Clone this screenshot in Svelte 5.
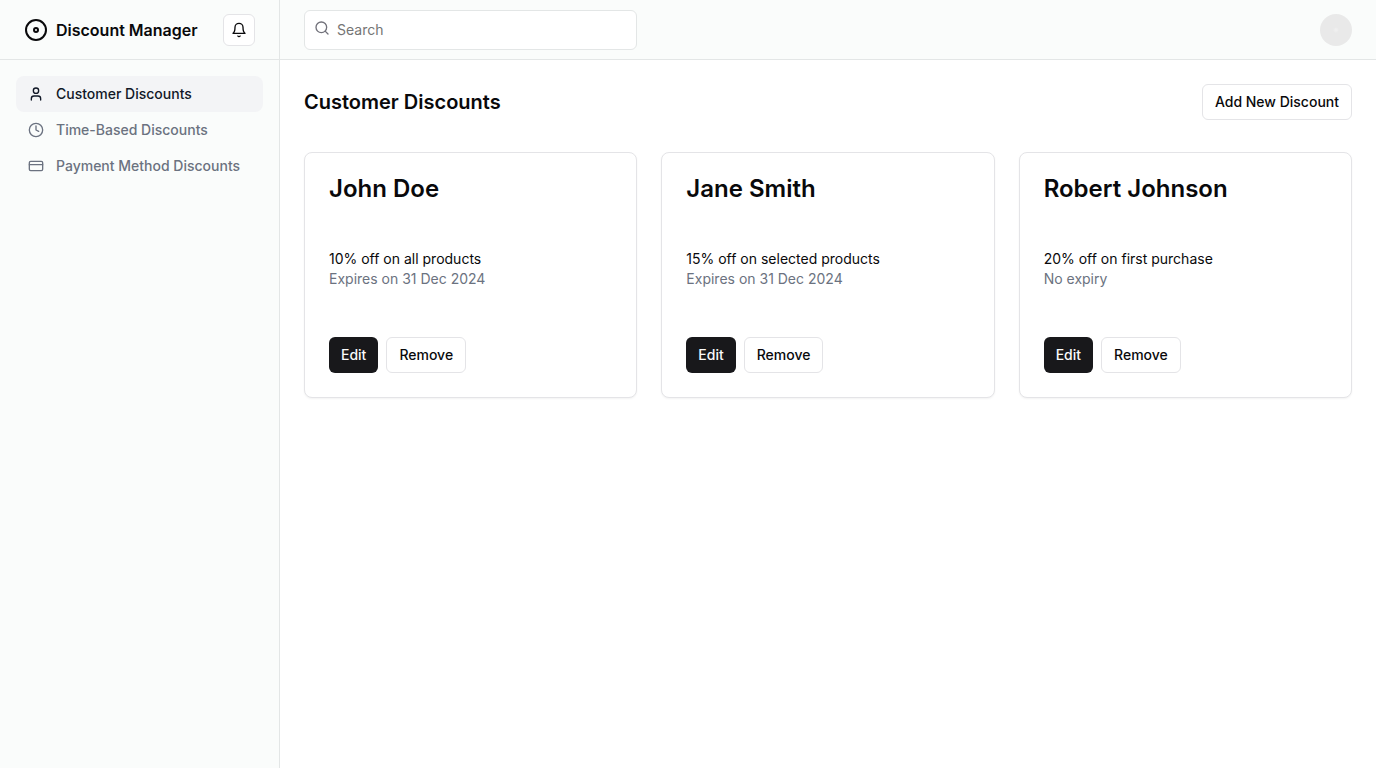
<script>
  const customers = [
    { name: 'John Doe', offer: '10% off on all products', expiry: 'Expires on 31 Dec 2024' },
    { name: 'Jane Smith', offer: '15% off on selected products', expiry: 'Expires on 31 Dec 2024' },
    { name: 'Robert Johnson', offer: '20% off on first purchase', expiry: 'No expiry' }
  ];
  let query = $state('');
</script>

<div class="layout">
  <aside class="sidebar">
    <div class="brand-bar">
      <a class="brand" href="#home">
        <svg class="icon logo" viewBox="0 0 24 24" aria-hidden="true">
          <circle cx="12" cy="12" r="10" />
          <circle cx="12" cy="12" r="2" />
        </svg>
        <span>Discount Manager</span>
      </a>
      <button class="btn bell" type="button" aria-label="Notifications">
        <svg class="icon" viewBox="0 0 24 24" aria-hidden="true">
          <path d="M6 8a6 6 0 0 1 12 0c0 7 3 9 3 9H3s3-2 3-9" />
          <path d="M10.3 21a1.94 1.94 0 0 0 3.4 0" />
        </svg>
      </button>
    </div>
    <nav class="nav">
      <a class="active" href="#customer" aria-current="page">
        <svg class="icon" viewBox="0 0 24 24" aria-hidden="true">
          <path d="M19 21v-2a4 4 0 0 0-4-4H9a4 4 0 0 0-4 4v2" />
          <circle cx="12" cy="7" r="4" />
        </svg>
        Customer Discounts
      </a>
      <a href="#time">
        <svg class="icon" viewBox="0 0 24 24" aria-hidden="true">
          <circle cx="12" cy="12" r="10" />
          <path d="M12 6v6l4 2" />
        </svg>
        Time-Based Discounts
      </a>
      <a href="#payment">
        <svg class="icon" viewBox="0 0 24 24" aria-hidden="true">
          <rect x="2" y="5" width="20" height="14" rx="2" />
          <path d="M2 10h20" />
        </svg>
        Payment Method Discounts
      </a>
    </nav>
  </aside>

  <div class="page">
    <header class="topbar">
      <form class="search" role="search">
        <svg class="icon" viewBox="0 0 24 24" aria-hidden="true">
          <circle cx="11" cy="11" r="8" />
          <path d="m21 21-4.3-4.3" />
        </svg>
        <input type="search" placeholder="Search" aria-label="Search" bind:value={query} />
      </form>
      <button class="avatar" type="button" aria-label="User menu"></button>
    </header>

    <main class="content">
      <div class="heading">
        <h1>Customer Discounts</h1>
        <button class="btn" type="button">Add New Discount</button>
      </div>
      <div class="cards">
        {#each customers as customer}
          <article class="card">
            <h2>{customer.name}</h2>
            <div class="details">
              <p>{customer.offer}</p>
              <p class="expiry">{customer.expiry}</p>
            </div>
            <div class="actions">
              <button class="btn primary" type="button">Edit</button>
              <button class="btn" type="button">Remove</button>
            </div>
          </article>
        {/each}
      </div>
    </main>
  </div>
</div>

<style>
  :global(body) {
    margin: 0;
    background: #fff;
    color: #09090b;
    font-family: Inter, sans-serif;
    font-size: 14px;
    line-height: 20px;
  }
  .layout, .layout * { box-sizing: border-box; }
  .layout {
    display: grid;
    grid-template-columns: 280px minmax(0, 1fr);
    min-height: 100vh;
  }
  h1, h2, p { margin: 0; }
  h1, h2 { font-weight: 600; }
  a { color: inherit; text-decoration: none; }
  .icon {
    width: 16px;
    height: 16px;
    flex-shrink: 0;
    fill: none;
    stroke: currentColor;
    stroke-width: 2;
    stroke-linecap: round;
    stroke-linejoin: round;
  }
  .sidebar {
    background: #fafcfb;
    border-right: 1px solid #e3e6e6;
  }
  .brand-bar {
    display: flex;
    align-items: center;
    justify-content: space-between;
    height: 60px;
    padding: 0 24px;
    border-bottom: 1px solid #e3e6e6;
  }
  .brand {
    display: flex;
    align-items: center;
    gap: 8px;
    font-size: 16px;
    line-height: 24px;
    font-weight: 600;
  }
  .logo { width: 24px; height: 24px; }
  .btn {
    display: inline-flex;
    align-items: center;
    justify-content: center;
    height: 36px;
    padding: 0 12px;
    border: 1px solid #e4e4e7;
    border-radius: 6px;
    background: #fff;
    color: #09090b;
    font: inherit;
    font-weight: 500;
    white-space: nowrap;
    cursor: pointer;
  }
  .bell { width: 32px; height: 32px; padding: 0; }
  .primary { background: #18181b; border: 0; color: #fafafa; }
  .nav {
    display: flex;
    flex-direction: column;
    padding: 16px;
    font-weight: 500;
  }
  .nav a {
    display: flex;
    align-items: center;
    gap: 12px;
    padding: 8px 12px;
    border-radius: 8px;
    color: #6b7280;
  }
  .nav .active { background: #f3f4f6; color: #111827; }
  .topbar {
    display: flex;
    align-items: center;
    justify-content: space-between;
    gap: 24px;
    height: 60px;
    padding: 0 24px;
    background: #fafcfb;
    border-bottom: 1px solid #e3e6e6;
  }
  .search {
    position: relative;
    width: calc((100% - 48px) / 3);
  }
  .search .icon {
    position: absolute;
    top: 10px;
    left: 10px;
    color: #71717a;
  }
  .search input {
    display: block;
    width: 100%;
    height: 40px;
    padding: 8px 12px 8px 32px;
    border: 1px solid #e3e6e6;
    border-radius: 6px;
    background: #fff;
    color: inherit;
    font: inherit;
    appearance: none;
  }
  .search input::placeholder { color: #757575; opacity: 1; }
  .avatar {
    width: 32px;
    height: 32px;
    padding: 0;
    border: 0;
    border-radius: 50%;
    background: radial-gradient(circle, #efefef 0 1px, #e9e9e9 3px);
    cursor: pointer;
  }
  .content {
    display: flex;
    flex-direction: column;
    gap: 32px;
    padding: 24px;
  }
  .heading {
    display: flex;
    align-items: center;
    justify-content: space-between;
  }
  h1 { font-size: 20px; line-height: 28px; }
  .cards {
    display: grid;
    grid-template-columns: repeat(3, minmax(0, 1fr));
    gap: 24px;
  }
  .card {
    display: flex;
    flex-direction: column;
    gap: 48px;
    padding: 24px;
    border: 1px solid #e4e4e7;
    border-radius: 8px;
    background: #fff;
    box-shadow: 0 1px 2px rgba(0, 0, 0, 0.05);
  }
  h2 { font-size: 24px; line-height: 24px; }
  .expiry { color: #6b7280; }
  .actions { display: flex; gap: 8px; }
</style>
